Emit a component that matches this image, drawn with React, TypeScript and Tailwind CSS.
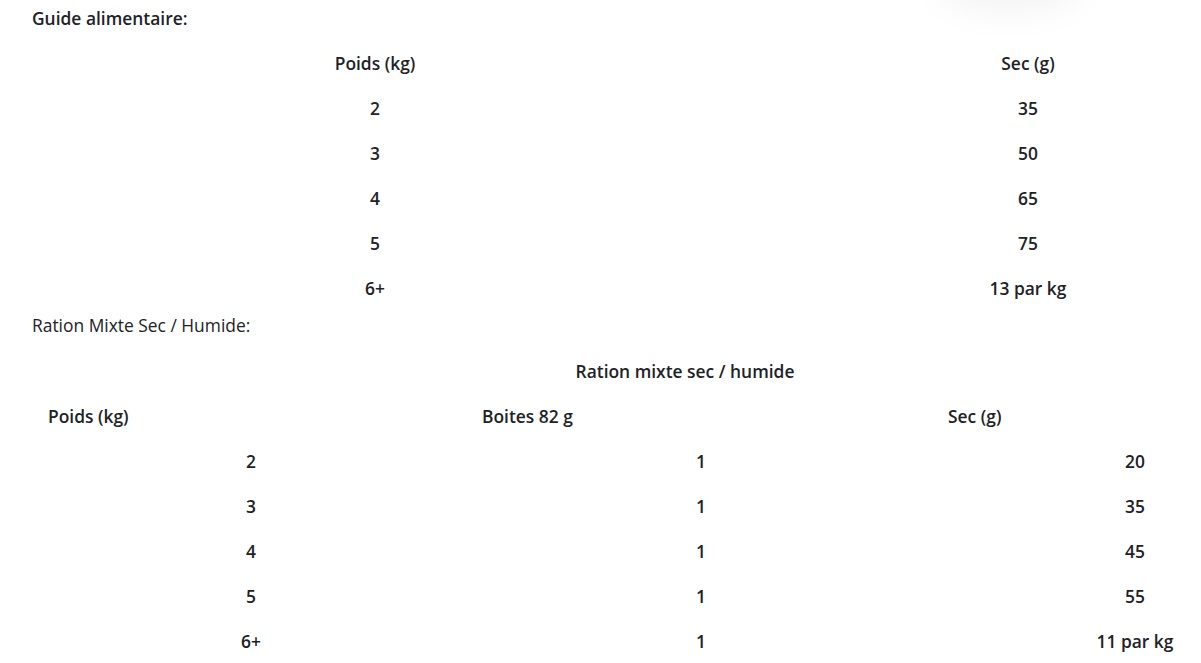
const guide = [
  ['2', '35'],
  ['3', '50'],
  ['4', '65'],
  ['5', '75'],
  ['6+', '13 par kg'],
];

const mixte = [
  ['2', '1', '20'],
  ['3', '1', '35'],
  ['4', '1', '45'],
  ['5', '1', '55'],
  ['6+', '1', '11 par kg'],
];

export default function App() {
  return (
    <div className="relative w-[1201px] h-[663px] overflow-hidden bg-white text-[17.4px] text-[#222226] font-['Open_Sans',sans-serif]">
      {/* soft shadow of an element above the fold */}
      <div className="absolute -top-[90px] left-[935px] w-[150px] h-[90px] rounded-full bg-white shadow-[0_6px_40px_rgba(0,0,0,0.06)]" />

      <div className="relative pt-[6px] pl-[32px]">
        <p className="h-[24px] leading-[24px] font-semibold">Guide alimentaire:</p>

        {/* Table 1 */}
        <div className="mt-[11px] grid grid-cols-[686px_620px] font-semibold">
          <div className="h-[45px] flex items-center justify-center">Poids (kg)</div>
          <div className="h-[45px] flex items-center justify-center">Sec (g)</div>
          {guide.map(([w, s]) => (
            <div key={w} className="contents">
              <div className="h-[45px] flex items-center justify-center">{w}</div>
              <div className="h-[45px] flex items-center justify-center">{s}</div>
            </div>
          ))}
        </div>

        <p className="mt-[2px] h-[24px] leading-[24px]">Ration Mixte Sec / Humide:</p>

        {/* Table 2 */}
        <div className="mt-[12px] ml-[2px] w-[1302px] font-semibold">
          <div className="h-[45px] flex items-center justify-center">Ration mixte sec / humide</div>
          <div className="grid grid-cols-[434px_466px_402px]">
            <div className="h-[45px] flex items-center px-[14px]">Poids (kg)</div>
            <div className="h-[45px] flex items-center px-[14px]">Boites 82 g</div>
            <div className="h-[45px] flex items-center px-[14px]">Sec (g)</div>
            {mixte.map(([w, b, s]) => (
              <div key={w} className="contents">
                <div className="h-[45px] flex items-center justify-center">{w}</div>
                <div className="h-[45px] flex items-center justify-center">{b}</div>
                <div className="h-[45px] flex items-center justify-center">{s}</div>
              </div>
            ))}
          </div>
        </div>
      </div>
    </div>
  );
}
